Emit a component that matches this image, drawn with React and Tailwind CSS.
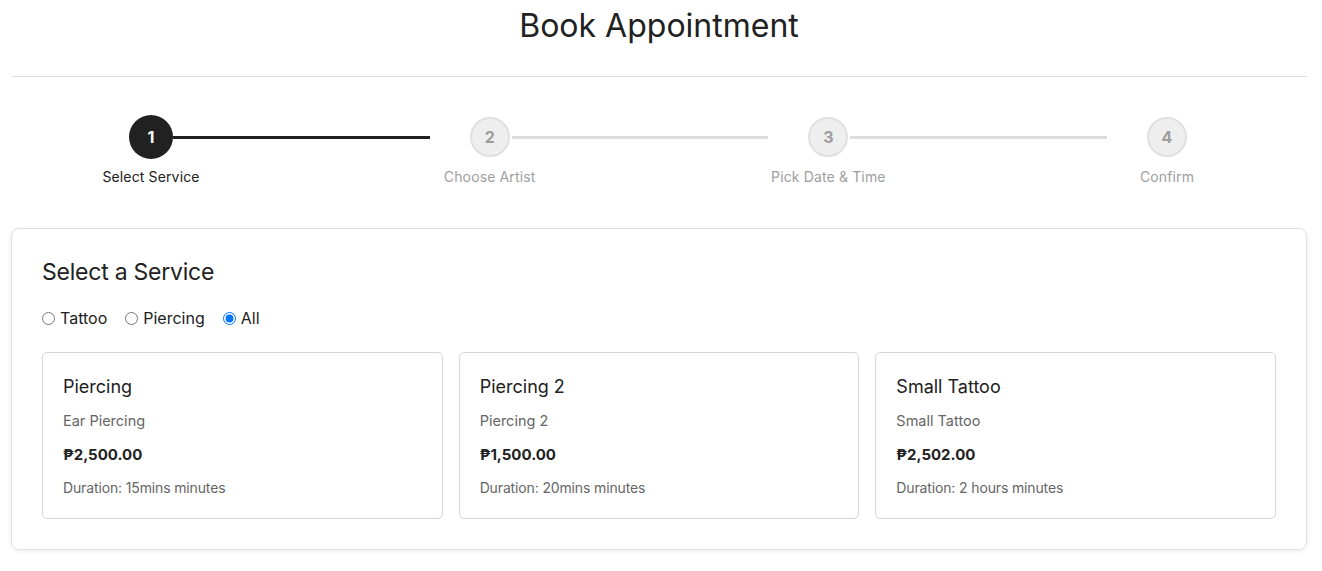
import React from "react";

const steps = ["Select Service", "Choose Artist", "Pick Date & Time", "Confirm"];

const services = [
  { name: "Piercing", desc: "Ear Piercing", price: "₱2,500.00", duration: "Duration: 15mins minutes" },
  { name: "Piercing 2", desc: "Piercing 2", price: "₱1,500.00", duration: "Duration: 20mins minutes" },
  { name: "Small Tattoo", desc: "Small Tattoo", price: "₱2,502.00", duration: "Duration: 2 hours minutes" },
];

function Step({ index, label, active }) {
  return (
    <div className="w-[120px] shrink-0 flex flex-col items-center">
      <div className="h-[44px] flex items-center justify-center">
        {active ? (
          <div className="w-[44px] h-[44px] rounded-full bg-[#212121] text-white flex items-center justify-center text-[16px] font-bold">
            {index}
          </div>
        ) : (
          <div className="w-[40px] h-[40px] rounded-full bg-[#eeeeee] border-2 border-[#e0e0e0] text-[#9e9e9e] flex items-center justify-center text-[16px] font-bold">
            {index}
          </div>
        )}
      </div>
      <div className={`mt-2 text-[14px] leading-[20px] whitespace-nowrap tracking-[0.01em] ${active ? "text-[#212121]" : "text-[#9e9e9e]"}`}>
        {label}
      </div>
    </div>
  );
}

export default function App() {
  return (
    <div className="bg-white min-h-[571px]" style={{ fontFamily: "Inter, 'Noto Sans', sans-serif" }}>
      <div className="ml-[11px] w-[1296px]">
        <div className="border-b border-[#e0e0e0] pt-[2px] pb-[26px]">
          <h1 className="text-center text-[32px] leading-[48px] text-[#212121] font-normal">Book Appointment</h1>
        </div>

        <div className="mt-[38px] px-[80px] flex items-start">
          {steps.map((s, i) => (
            <React.Fragment key={s}>
              <Step index={i + 1} label={s} active={i === 0} />
              {i < steps.length - 1 && (
                <div
                  className={`flex-1 h-[3px] mt-[21px] ml-[-38px] ${i === 0 ? "bg-[#212121]" : "bg-[#dddddd]"}`}
                />
              )}
            </React.Fragment>
          ))}
        </div>

        <div className="mt-[41px] border border-[#e0e0e0] rounded-lg shadow-[0_1px_4px_rgba(0,0,0,0.08)] px-[30px] pt-[27px] pb-[30px]">
          <h2 className="text-[23px] leading-[32px] tracking-[-0.01em] text-[#212121] font-normal">Select a Service</h2>
          <div className="mt-[18px] flex items-center gap-[18px] text-[16px] leading-[24px] text-[#212121]">
            <label className="flex items-center gap-[5px]">
              <input type="radio" name="type" className="w-[13px] h-[13px]" readOnly />
              Tattoo
            </label>
            <label className="flex items-center gap-[5px]">
              <input type="radio" name="type" className="w-[13px] h-[13px]" readOnly />
              Piercing
            </label>
            <label className="flex items-center gap-[5px]">
              <input type="radio" name="type" className="w-[13px] h-[13px]" defaultChecked />
              All
            </label>
          </div>

          <div className="mt-[22px] grid grid-cols-3 gap-4">
            {services.map((s) => (
              <div key={s.name} className="border border-[#d6d6d6] rounded-[5px] p-5">
                <div className="text-[18px] leading-[28px] text-[#212121]">{s.name}</div>
                <div className="mt-[10px] text-[14.5px] leading-[20px] text-[#666666]">{s.desc}</div>
                <div className="mt-[12px] text-[15px] leading-[24px] font-bold text-[#212121]">{s.price}</div>
                <div className="mt-[11px] text-[14px] leading-[20px] tracking-[-0.01em] text-[#666666]">{s.duration}</div>
              </div>
            ))}
          </div>
        </div>
      </div>
    </div>
  );
}
